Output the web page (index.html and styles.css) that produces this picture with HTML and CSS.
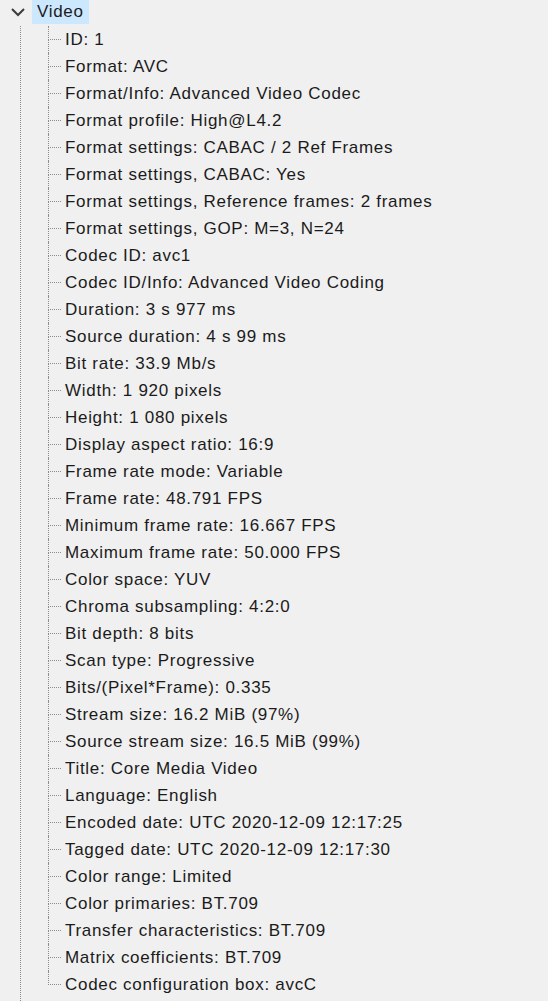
FILE: index.html
```html
<!DOCTYPE html>
<html>
<head>
<meta charset="utf-8">
<link rel="stylesheet" href="styles.css">
</head>
<body>
<div class="tree">
  <div class="root-row">
    <svg class="chevron" width="14" height="10" viewBox="0 0 14 10"><polyline points="1,2 7,8 13,2" fill="none" stroke="#3c3c3c" stroke-width="2"/></svg>
    <span class="root-label">Video</span>
  </div>
  <div class="branch">
    <ul class="children">
      <li><span class="conn"><i class="up"></i><i class="down"></i></span><span class="label">ID: 1</span></li>
      <li><span class="conn"><i class="up"></i><i class="down"></i></span><span class="label">Format: AVC</span></li>
      <li><span class="conn"><i class="up"></i><i class="down"></i></span><span class="label">Format/Info: Advanced Video Codec</span></li>
      <li><span class="conn"><i class="up"></i><i class="down"></i></span><span class="label">Format profile: High@L4.2</span></li>
      <li><span class="conn"><i class="up"></i><i class="down"></i></span><span class="label">Format settings: CABAC / 2 Ref Frames</span></li>
      <li><span class="conn"><i class="up"></i><i class="down"></i></span><span class="label">Format settings, CABAC: Yes</span></li>
      <li><span class="conn"><i class="up"></i><i class="down"></i></span><span class="label">Format settings, Reference frames: 2 frames</span></li>
      <li><span class="conn"><i class="up"></i><i class="down"></i></span><span class="label">Format settings, GOP: M=3, N=24</span></li>
      <li><span class="conn"><i class="up"></i><i class="down"></i></span><span class="label">Codec ID: avc1</span></li>
      <li><span class="conn"><i class="up"></i><i class="down"></i></span><span class="label">Codec ID/Info: Advanced Video Coding</span></li>
      <li><span class="conn"><i class="up"></i><i class="down"></i></span><span class="label">Duration: 3 s 977 ms</span></li>
      <li><span class="conn"><i class="up"></i><i class="down"></i></span><span class="label">Source duration: 4 s 99 ms</span></li>
      <li><span class="conn"><i class="up"></i><i class="down"></i></span><span class="label">Bit rate: 33.9 Mb/s</span></li>
      <li><span class="conn"><i class="up"></i><i class="down"></i></span><span class="label">Width: 1 920 pixels</span></li>
      <li><span class="conn"><i class="up"></i><i class="down"></i></span><span class="label">Height: 1 080 pixels</span></li>
      <li><span class="conn"><i class="up"></i><i class="down"></i></span><span class="label">Display aspect ratio: 16:9</span></li>
      <li><span class="conn"><i class="up"></i><i class="down"></i></span><span class="label">Frame rate mode: Variable</span></li>
      <li><span class="conn"><i class="up"></i><i class="down"></i></span><span class="label">Frame rate: 48.791 FPS</span></li>
      <li><span class="conn"><i class="up"></i><i class="down"></i></span><span class="label">Minimum frame rate: 16.667 FPS</span></li>
      <li><span class="conn"><i class="up"></i><i class="down"></i></span><span class="label">Maximum frame rate: 50.000 FPS</span></li>
      <li><span class="conn"><i class="up"></i><i class="down"></i></span><span class="label">Color space: YUV</span></li>
      <li><span class="conn"><i class="up"></i><i class="down"></i></span><span class="label">Chroma subsampling: 4:2:0</span></li>
      <li><span class="conn"><i class="up"></i><i class="down"></i></span><span class="label">Bit depth: 8 bits</span></li>
      <li><span class="conn"><i class="up"></i><i class="down"></i></span><span class="label">Scan type: Progressive</span></li>
      <li><span class="conn"><i class="up"></i><i class="down"></i></span><span class="label">Bits/(Pixel*Frame): 0.335</span></li>
      <li><span class="conn"><i class="up"></i><i class="down"></i></span><span class="label">Stream size: 16.2 MiB (97%)</span></li>
      <li><span class="conn"><i class="up"></i><i class="down"></i></span><span class="label">Source stream size: 16.5 MiB (99%)</span></li>
      <li><span class="conn"><i class="up"></i><i class="down"></i></span><span class="label">Title: Core Media Video</span></li>
      <li><span class="conn"><i class="up"></i><i class="down"></i></span><span class="label">Language: English</span></li>
      <li><span class="conn"><i class="up"></i><i class="down"></i></span><span class="label">Encoded date: UTC 2020-12-09 12:17:25</span></li>
      <li><span class="conn"><i class="up"></i><i class="down"></i></span><span class="label">Tagged date: UTC 2020-12-09 12:17:30</span></li>
      <li><span class="conn"><i class="up"></i><i class="down"></i></span><span class="label">Color range: Limited</span></li>
      <li><span class="conn"><i class="up"></i><i class="down"></i></span><span class="label">Color primaries: BT.709</span></li>
      <li><span class="conn"><i class="up"></i><i class="down"></i></span><span class="label">Transfer characteristics: BT.709</span></li>
      <li><span class="conn"><i class="up"></i><i class="down"></i></span><span class="label">Matrix coefficients: BT.709</span></li>
      <li class="last"><span class="conn"><i class="up"></i><i class="down"></i></span><span class="label">Codec configuration box: avcC</span></li>
    </ul>
  </div>
</div>
</body>
</html>
```

FILE: styles.css
```css
html, body {
  margin: 0;
  padding: 0;
  background: #f0f0f0;
}
body {
  font-family: "Liberation Sans", Arial, sans-serif;
  font-size: 17px;
  letter-spacing: 0.7px;
  color: #1b1b1b;
  height: 1001px;
  overflow: hidden;
}
.tree {
  display: flex;
  flex-direction: column;
  height: 100%;
}
.root-row {
  display: flex;
  align-items: flex-start;
  height: 26px;
}
.chevron {
  margin: 7px 0 0 11px;
}
.root-label {
  margin-left: 7px;
  height: 24px;
  line-height: 24px;
  padding: 0 5px 0 5px;
  background: #cce8ff;
}
.branch {
  margin-left: 20px;
  border-left: 1px dotted #8c8c8c;
  flex: 1;
}
.children {
  list-style: none;
  margin: 0 0 0 27px;
  padding: 0;
}
.children li {
  display: flex;
  align-items: stretch;
  height: 27px;
}
.conn {
  display: flex;
  flex-direction: column;
  width: 13px;
  flex: none;
}
.conn i {
  display: block;
  flex: 1;
  border-left: 1px dotted #8c8c8c;
}
.conn .up {
  border-bottom: 1px dotted #8c8c8c;
  flex: none;
  height: 13px;
}
.last .conn .down {
  border-left-color: transparent;
}
.label {
  margin-left: 4px;
  line-height: 27px;
  white-space: nowrap;
}
```
